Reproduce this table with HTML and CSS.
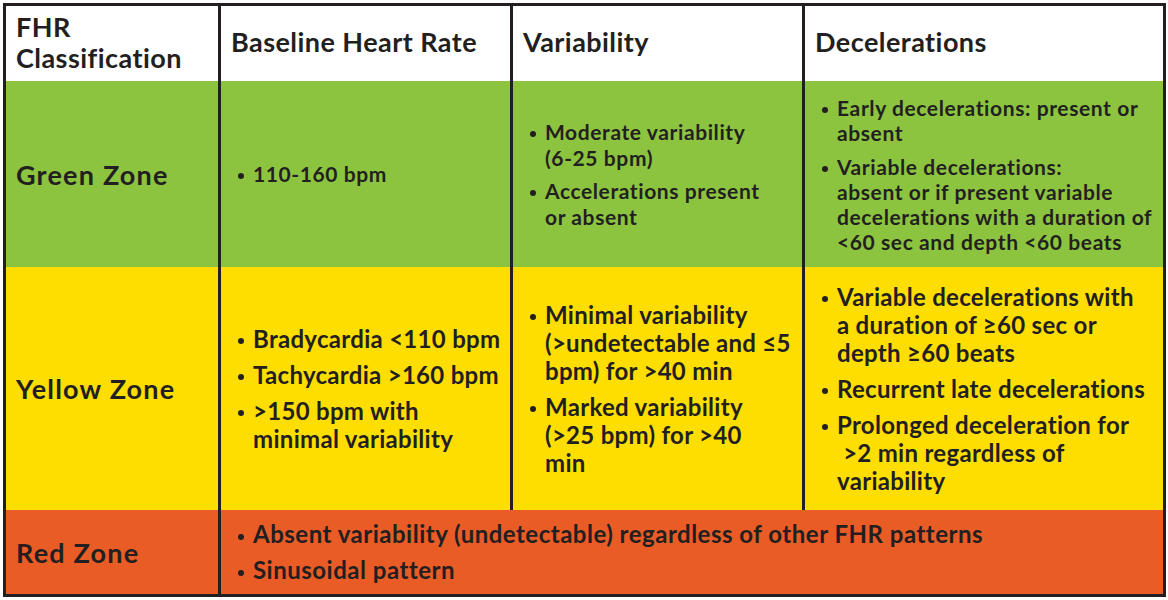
FILE: index.html
```html
<!DOCTYPE html>
<html lang="en">
<head>
<meta charset="utf-8">
<title>FHR Classification</title>
<link rel="stylesheet" href="styles.css">
</head>
<body>
<div class="fhr">
  <div class="cell head">FHR<br>Classification</div>
  <div class="cell head">Baseline Heart Rate</div>
  <div class="cell head">Variability</div>
  <div class="cell head">Decelerations</div>

  <div class="cell green zone">Green Zone</div>
  <div class="cell green"><ul class="list sm"><li>110-160 bpm</li></ul></div>
  <div class="cell green"><ul class="list sm">
    <li>Moderate variability<br>(6-25 bpm)</li>
    <li>Accelerations present<br>or absent</li>
  </ul></div>
  <div class="cell green"><ul class="list sm g25">
    <li>Early decelerations: present or<br>absent</li>
    <li>Variable decelerations:<br>absent or if present variable<br>decelerations with a duration of<br>&lt;60 sec and depth &lt;60 beats</li>
  </ul></div>

  <div class="cell yellow zone">Yellow Zone</div>
  <div class="cell yellow"><ul class="list lg">
    <li>Bradycardia &lt;110 bpm</li>
    <li>Tachycardia &gt;160 bpm</li>
    <li>&gt;150 bpm with<br>minimal variability</li>
  </ul></div>
  <div class="cell yellow"><ul class="list lg">
    <li>Minimal variability<br>(&gt;undetectable and &le;5<br>bpm) for &gt;40 min</li>
    <li>Marked variability<br>(&gt;25 bpm) for &gt;40<br>min</li>
  </ul></div>
  <div class="cell yellow"><ul class="list lg">
    <li>Variable decelerations with<br>a duration of &ge;60 sec or<br>depth &ge;60 beats</li>
    <li>Recurrent late decelerations</li>
    <li>Prolonged deceleration for<br>&nbsp;&gt;2 min regardless of<br>variability</li>
  </ul></div>

  <div class="cell red zone">Red Zone</div>
  <div class="cell red span3"><ul class="list lg wide">
    <li>Absent variability (undetectable) regardless of other FHR patterns</li>
    <li>Sinusoidal pattern</li>
  </ul></div>
</div>
</body>
</html>
```

FILE: styles.css
```css
html, body {
  margin: 0;
  padding: 0;
  background: #ffffff;
}

body {
  font-family: "Lato", "Open Sans", "DejaVu Sans", sans-serif;
  font-weight: 700;
  color: #231f20;
}

.fhr {
  margin: 3px 0 0 3px;
  width: 1163px;
  box-sizing: border-box;
  padding: 3px;
  background: #231f20;
  display: grid;
  grid-template-columns: 212px 289px 289px 358px;
  grid-template-rows: 75px 186px 243px 84px;
  column-gap: 3px;
  row-gap: 0;
}

.cell {
  display: flex;
  align-items: center;
  padding: 0 4px 0 17px;
  min-width: 0;
}

.head {
  background: #ffffff;
  font-size: 27px;
  line-height: 31px;
  letter-spacing: 0.45px;
  padding-left: 10px;
  padding-bottom: 4px;
}

.green { background: #8cc43f; }
.yellow { background: #fedd00; }
.red { background: #e95c26; }

.zone {
  font-size: 27px;
  letter-spacing: 1.2px;
  padding-left: 10px;
}

.span3 {
  grid-column: span 3;
}

.list {
  list-style: none;
  margin: 0;
  padding: 0;
  white-space: nowrap;
  display: flex;
  flex-direction: column;
}

.list li {
  display: flex;
  align-items: flex-start;
}

.list li::before {
  content: "";
  flex: none;
  width: 6px;
  height: 6px;
  border-radius: 50%;
  background: currentColor;
  margin-right: 9px;
  margin-top: 0.58em;
}

.sm {
  font-size: 21px;
  letter-spacing: 0.6px;
  line-height: 26px;
  gap: 7px;
}

.sm.g25 {
  line-height: 25px;
  gap: 9px;
}

.lg {
  font-size: 24px;
  letter-spacing: 0.3px;
  line-height: 28px;
  gap: 8px;
}

.lg.wide {
  letter-spacing: 0.5px;
}
```
